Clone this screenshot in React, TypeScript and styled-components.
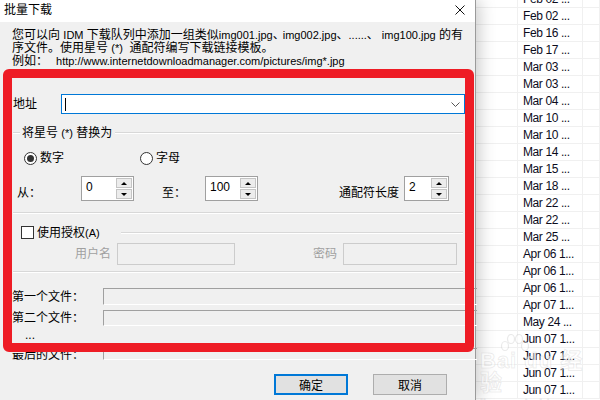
import React from "react";
import styled, { createGlobalStyle } from "styled-components";

const Global = createGlobalStyle`
  html, body { margin: 0; padding: 0; background: #fff; }
  body {
    font-family: "Liberation Sans", "Noto Sans CJK SC", sans-serif;
    font-size: 12px;
    color: #000;
  }
`;

const Screen = styled.div`
  position: relative;
  width: 600px;
  height: 400px;
  overflow: hidden;
  display: flex;
  background: #fff;
`;

const Dialog = styled.div`
  width: 475px;
  flex-shrink: 0;
  background: #f0f0f0;
  border-right: 1px solid #9a9a9a;
  box-shadow: 3px 0 16px rgba(0, 0, 0, 0.22);
  position: relative;
  z-index: 1;
  display: flex;
  flex-direction: column;
`;

const TitleBar = styled.div`
  height: 22px;
  background: #fff;
  display: flex;
  align-items: center;
  justify-content: space-between;
  padding: 0 10px 3px 4px;
  box-sizing: border-box;
`;

const Title = styled.div`
  font-size: 12px;
  line-height: 14px;
`;

const Body = styled.div`
  display: flex;
  flex-direction: column;
  padding: 7px 10px 0 12px;
`;

const Desc = styled.div`
  line-height: 13px;
`;

const DescLine = styled.div`
  white-space: nowrap;
`;

const Lat = styled.span<{ $ml?: number }>`
  font-size: 11px;
  margin-left: ${(p) => p.$ml ?? 0}px;
`;

const Sep = styled.span<{ $w: number }>`
  display: inline-block;
  width: ${(p) => p.$w}px;
  overflow: visible;
  white-space: nowrap;
`;

const Row = styled.div<{ $mt: number; $h: number; $align?: string }>`
  display: flex;
  align-items: ${(p) => p.$align ?? "center"};
  margin-top: ${(p) => p.$mt}px;
  height: ${(p) => p.$h}px;
  white-space: nowrap;
`;

const Label = styled.div<{ $w?: number; $ml?: number; $mb?: number; $gray?: boolean }>`
  width: ${(p) => (p.$w ? `${p.$w}px` : "auto")};
  margin-left: ${(p) => p.$ml ?? 0}px;
  margin-bottom: ${(p) => p.$mb ?? 0}px;
  line-height: 14px;
  flex-shrink: 0;
  color: ${(p) => (p.$gray ? "#a0a0a0" : "#000")};
`;

const AddressBox = styled.div`
  flex: 1;
  height: 20px;
  box-sizing: border-box;
  border: 1px solid #0078d7;
  background: #fff;
  display: flex;
  align-items: center;
  justify-content: space-between;
  padding: 0 4px 0 3px;
`;

const Caret = styled.div`
  width: 1px;
  height: 13px;
  background: #000;
`;

const Etch = styled.div<{ $w?: number; $ml?: number; $mr?: number }>`
  ${(p) => (p.$w ? `width: ${p.$w}px;` : "flex: 1;")}
  margin-left: ${(p) => p.$ml ?? 0}px;
  margin-right: ${(p) => p.$mr ?? 0}px;
  height: 0;
  border-top: 1px solid #d8d8d8;
  border-bottom: 1px solid #ffffff;
`;

const Separator = styled.div<{ $mt: number }>`
  margin-top: ${(p) => p.$mt}px;
  margin-left: 1px;
  margin-right: 2px;
  border-top: 1px solid #d8d8d8;
  border-bottom: 1px solid #ffffff;
`;

const RadioItem = styled.div<{ $w?: number; $ml?: number }>`
  display: flex;
  align-items: center;
  width: ${(p) => (p.$w ? `${p.$w}px` : "auto")};
  margin-left: ${(p) => p.$ml ?? 0}px;
`;

const RadioCircle = styled.div<{ $on?: boolean }>`
  width: 13px;
  height: 13px;
  box-sizing: border-box;
  border-radius: 50%;
  border: 1px solid #333;
  background: #fff;
  display: flex;
  align-items: center;
  justify-content: center;
  margin-right: 3px;
  &::after {
    content: "";
    display: ${(p) => (p.$on ? "block" : "none")};
    width: 7px;
    height: 7px;
    border-radius: 50%;
    background: #333;
  }
`;

const Spin = styled.div<{ $w: number; $ml?: number; $mr?: number }>`
  width: ${(p) => p.$w}px;
  height: 25px;
  margin-left: ${(p) => p.$ml ?? 0}px;
  margin-right: ${(p) => p.$mr ?? 0}px;
  flex-shrink: 0;
  box-sizing: border-box;
  border: 1px solid #a0a0a0;
  background: #fff;
  display: flex;
`;

const SpinText = styled.div`
  flex: 1;
  padding: 3px 0 0 4px;
  line-height: 14px;
`;

const SpinBtns = styled.div`
  width: 16px;
  display: flex;
  flex-direction: column;
  gap: 1px;
  padding: 1px 1px 1px 0;
`;

const SpinBtn = styled.div`
  flex: 1;
  background: #ececec;
  border: 1px solid #c4c4c4;
  display: flex;
  align-items: center;
  justify-content: center;
`;

const Arrow = styled.div<{ $down?: boolean }>`
  width: 0;
  height: 0;
  border-left: 3px solid transparent;
  border-right: 3px solid transparent;
  ${(p) => (p.$down ? "border-top: 3px solid #000;" : "border-bottom: 3px solid #000;")}
`;

const CheckBox = styled.div`
  width: 13px;
  height: 13px;
  box-sizing: border-box;
  border: 1px solid #333;
  background: #fff;
  margin-left: 9px;
  margin-right: 3px;
  flex-shrink: 0;
`;

const DisabledInput = styled.div<{ $w: number; $ml?: number }>`
  width: ${(p) => p.$w}px;
  height: 22px;
  margin-left: ${(p) => p.$ml ?? 0}px;
  box-sizing: border-box;
  border: 1px solid #cccccc;
  background: #f0f0f0;
  flex-shrink: 0;
`;

const StaticField = styled.div<{ $h: number }>`
  flex: 1;
  height: ${(p) => p.$h}px;
  box-sizing: border-box;
  border-top: 1px solid #a0a0a0;
  border-left: 1px solid #a0a0a0;
  border-bottom: 1px solid #ffffff;
  margin-right: -12px;
`;

const ButtonRow = styled.div`
  display: flex;
  justify-content: flex-end;
  gap: 25px;
  margin-top: 14px;
  margin-right: 18px;
`;

const Button = styled.div<{ $primary?: boolean }>`
  width: 74px;
  height: 21px;
  box-sizing: border-box;
  background: #e1e1e1;
  border: ${(p) => (p.$primary ? "2px solid #0078d7" : "1px solid #adadad")};
  display: flex;
  align-items: center;
  justify-content: center;
  font-size: 12px;
`;

const List = styled.div`
  flex: 1;
  margin-top: -9px;
  display: flex;
  flex-direction: column;
  background: #fff;
`;

const ListRow = styled.div`
  height: 16px;
  flex-shrink: 0;
  border-bottom: 1px solid #f0f0f0;
  display: flex;
`;

const Cell = styled.div<{ $w?: number }>`
  ${(p) => (p.$w ? `width: ${p.$w}px;` : "flex: 1;")}
  border-right: 1px solid #f0f0f0;
  padding-left: ${(p) => (p.$w && p.$w > 50 ? 5 : 0)}px;
  line-height: 16px;
  font-size: 12px;
  letter-spacing: -0.4px;
  color: #0c0c1c;
  white-space: nowrap;
  overflow: hidden;
`;

const Highlight = styled.div`
  position: absolute;
  left: 3px;
  top: 69px;
  width: 471px;
  height: 283px;
  box-sizing: border-box;
  border: 9px solid #ee1c25;
  border-radius: 6px;
  z-index: 5;
  pointer-events: none;
`;

const Watermark = styled.div`
  position: absolute;
  left: 480px;
  top: 334px;
  z-index: 4;
  display: flex;
  flex-direction: column;
  align-items: flex-start;
  color: rgba(255, 255, 255, 0.5);
  -webkit-text-stroke: 1px rgba(140, 140, 140, 0.16);
  pointer-events: none;
`;

const WmPaw = styled.svg`
  margin-left: 18px;
  margin-bottom: -12px;
`;

const WmMain = styled.div`
  font-family: "Liberation Sans", "Noto Sans CJK SC", sans-serif;
  font-weight: bold;
  font-size: 22px;
  line-height: 22px;
  letter-spacing: 1px;
`;

const WmSub = styled.div`
  font-family: "Liberation Sans", sans-serif;
  font-size: 13px;
  line-height: 14px;
  margin-top: 3px;
`;

const dates = [
  "Feb 02 ...",
  "Feb 02 ...",
  "Feb 16 ...",
  "Feb 17 ...",
  "Mar 03 ...",
  "Mar 03 ...",
  "Mar 04 ...",
  "Mar 10 ...",
  "Mar 10 ...",
  "Mar 14 ...",
  "Mar 15 ...",
  "Mar 18 ...",
  "Mar 22 ...",
  "Mar 22 ...",
  "Mar 25 ...",
  "Apr 06 1...",
  "Apr 06 1...",
  "Apr 06 1...",
  "Apr 07 1...",
  "May 24 ...",
  "Jun 07 1...",
  "Jun 07 1...",
  "Jun 07 1...",
  "Jun 07 1...",
];

const SpinBox = ({ w, value, ml, mr }: { w: number; value: string; ml?: number; mr?: number }) => (
  <Spin $w={w} $ml={ml} $mr={mr}>
    <SpinText>{value}</SpinText>
    <SpinBtns>
      <SpinBtn>
        <Arrow />
      </SpinBtn>
      <SpinBtn>
        <Arrow $down />
      </SpinBtn>
    </SpinBtns>
  </Spin>
);

export default function App() {
  return (
    <>
      <Global />
      <Screen>
        <Dialog>
          <TitleBar>
            <Title>批量下载</Title>
            <svg width="10" height="10" viewBox="0 0 10 10">
              <path d="M0.5 0.5 L9.5 9.5 M9.5 0.5 L0.5 9.5" stroke="#111" strokeWidth="1" />
            </svg>
          </TitleBar>
          <Body>
            <Desc>
              <DescLine>
                您可以向 <Lat>IDM</Lat> 下载队列中添加一组类似<Lat>img001.jpg</Lat>
                <Sep $w={10}>、</Sep>
                <Lat>img002.jpg</Lat>
                <Sep $w={12}>、</Sep>
                <Lat>......</Lat>
                <Sep $w={15}>、</Sep>
                <Lat>img100.jpg</Lat> 的有
              </DescLine>
              <DescLine>
                序文件。使用星号 <Lat>(*)</Lat>&nbsp; 通配符编写下载链接模板。
              </DescLine>
              <DescLine>
                例如：<Lat $ml={8}>http://www.internetdownloadmanager.com/pictures/img*.jpg</Lat>
              </DescLine>
            </Desc>

            <Row $mt={26} $h={20}>
              <Label $w={48} $ml={1}>地址</Label>
              <AddressBox>
                <Caret />
                <svg width="9" height="5" viewBox="0 0 9 5">
                  <path d="M0.5 0.5 L4.5 4.5 L8.5 0.5" fill="none" stroke="#555" strokeWidth="1" />
                </svg>
              </AddressBox>
            </Row>

            <Row $mt={12} $h={14}>
              <Etch $w={7} $ml={1} />
              <Label $ml={2}>
                将星号 <Lat>(*)</Lat> 替换为
              </Label>
              <Etch $ml={3} $mr={2} />
            </Row>

            <Row $mt={11} $h={14}>
              <RadioItem $w={116} $ml={12}>
                <RadioCircle $on />
                <Label>数字</Label>
              </RadioItem>
              <RadioItem>
                <RadioCircle />
                <Label>字母</Label>
              </RadioItem>
            </Row>

            <Row $mt={11} $h={25} $align="flex-end">
              <Label $w={64} $ml={5} $mb={1}>从：</Label>
              <SpinBox w={53} value="0" />
              <Label $w={43} $ml={28} $mb={1}>至：</Label>
              <SpinBox w={53} value="100" />
              <Label $ml={81} $mb={1}>通配符长度</Label>
              <SpinBox w={45} value="2" ml={5} mr={18} />
            </Row>

            <Separator $mt={11} />

            <Row $mt={12} $h={13}>
              <CheckBox />
              <Label>
                使用授权<Lat>(A)</Lat>
              </Label>
              <Etch $ml={21} $mr={2} />
            </Row>

            <Row $mt={4} $h={22}>
              <Label $ml={63} $gray>用户名</Label>
              <DisabledInput $w={118} $ml={6} />
              <Label $ml={78} $gray>密码</Label>
              <DisabledInput $w={114} $ml={6} />
            </Row>

            <Separator $mt={6} />

            <Row $mt={15} $h={17}>
              <Label $w={91}>第一个文件：</Label>
              <StaticField $h={17} />
            </Row>
            <Row $mt={5} $h={16}>
              <Label $w={91}>第二个文件：</Label>
              <StaticField $h={16} />
            </Row>
            <Row $mt={2} $h={14}>
              <Label $ml={13}>...</Label>
            </Row>
            <Row $mt={6} $h={12} $align="flex-start">
              <Label $w={91} $ml={0}>最后的文件：</Label>
              <StaticField $h={12} />
            </Row>

            <ButtonRow>
              <Button $primary>确定</Button>
              <Button>取消</Button>
            </ButtonRow>
          </Body>
        </Dialog>

        <List>
          {dates.map((d, i) => (
            <ListRow key={i}>
              <Cell $w={41} />
              <Cell $w={59}>{d}</Cell>
              <Cell />
            </ListRow>
          ))}
        </List>

        <Highlight />
        <Watermark>
          <WmPaw width="34" height="28" viewBox="0 0 34 28">
            <g fill="rgba(255,255,255,0.5)" stroke="rgba(140,140,140,0.18)" strokeWidth="1.2">
              <ellipse cx="7" cy="12" rx="3.5" ry="4.5" />
              <ellipse cx="13" cy="5" rx="3.5" ry="4.5" />
              <ellipse cx="21" cy="5" rx="3.5" ry="4.5" />
              <ellipse cx="27" cy="12" rx="3.5" ry="4.5" />
            </g>
          </WmPaw>
          <WmMain>Bai du 经验</WmMain>
          <WmSub>jingyan.baidu.com</WmSub>
        </Watermark>
      </Screen>
    </>
  );
}
